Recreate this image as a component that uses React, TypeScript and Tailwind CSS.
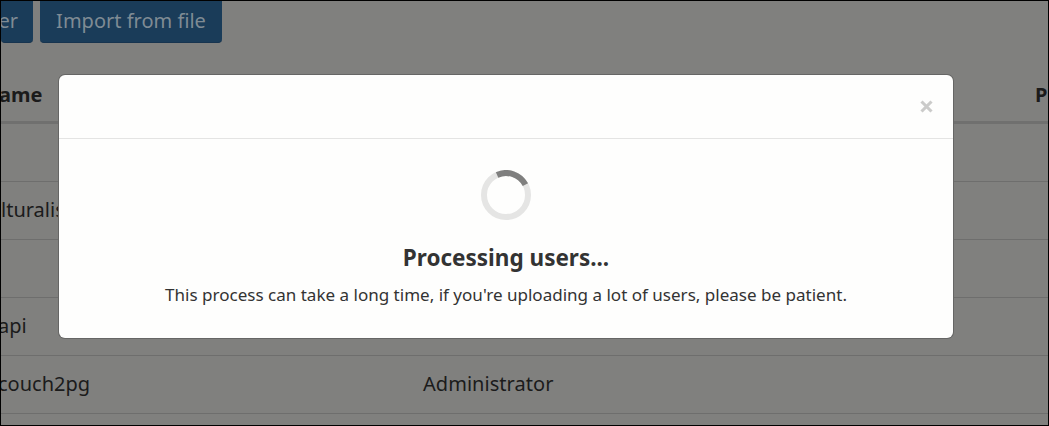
const rows = [
  { name: "", role: "", shift: "" },
  { name: "lturalist", role: "", shift: "ml-0" },
  { name: "", role: "", shift: "" },
  { name: "api", role: "", shift: "-ml-[3px]" },
  { name: "couch2pg", role: "Administrator", shift: "-ml-[3px]" },
];

function Spinner() {
  return (
    <svg width="50" height="50" viewBox="0 0 50 50" fill="none" strokeWidth="6">
      <circle cx="25" cy="25" r="22" stroke="#e5e5e4" />
      <path d="M16.1 4.9A22 22 0 0 1 44.4 14.7" stroke="#7f7f7e" />
    </svg>
  );
}

function UsersPage() {
  return (
    <div className="flex h-full flex-col text-[20px] leading-[28px] text-[#1b1b1b]">
      <div className="flex h-[42px] shrink-0 gap-[7px] text-[#7f8b94]">
        <button className="flex w-8 justify-end rounded-b-[4px] border-b border-[#17344f] bg-[#1a3c59] pt-[6px] pr-[15px] whitespace-nowrap">
          er
        </button>
        <button className="flex w-[182px] justify-center rounded-b-[4px] border-b border-[#17344f] bg-[#1a3c59] pt-[6px] whitespace-nowrap">
          Import from file
        </button>
      </div>
      <div className="flex h-[81px] shrink-0 items-end justify-between border-b-[3px] border-[#70706f] pb-[12px] font-bold">
        <span className="-ml-[2px]">ame</span>
        <span className="w-[13px]">P</span>
      </div>
      {rows.map((row, i) => (
        <div key={i} className="flex h-[58px] shrink-0 items-center border-b border-[#6e6e6d] pb-[2px]">
          <div className="w-[422px]">
            <span className={`inline-block ${row.shift}`}>{row.name}</span>
          </div>
          <span className="tracking-[0.04px]">{row.role}</span>
        </div>
      ))}
    </div>
  );
}

function ProcessingModal() {
  return (
    <div className="absolute top-[74px] left-[58px] w-[894px] rounded-[6px] bg-[#fefefd] text-[#333333] shadow-[0_0_0_1px_#666665]">
      <div className="flex h-16 items-center justify-end border-b border-[#e4e4e3] pr-[20px]">
        <button aria-label="Close" className="text-[#cbcbca]">
          <svg width="13" height="13" viewBox="0 0 13 13" stroke="currentColor" strokeWidth="3.1">
            <path d="M1.5 1.5L11.5 11.5M11.5 1.5L1.5 11.5" />
          </svg>
        </button>
      </div>
      <div className="flex h-[199px] flex-col items-center pt-[31px]">
        <Spinner />
        <h4 className="mt-[22px] text-[22.5px] leading-[32px] font-bold">Processing users...</h4>
        <p className="mt-[9px] text-[17.05px] leading-[24px] whitespace-nowrap">
          This process can take a long time, if you're uploading a lot of users, please be patient.
        </p>
      </div>
    </div>
  );
}

export default function App() {
  return (
    <div className="relative h-[426px] w-[1049px] overflow-hidden border border-black bg-[#80807e] font-['Noto_Sans',sans-serif]">
      <UsersPage />
      <ProcessingModal />
    </div>
  );
}
